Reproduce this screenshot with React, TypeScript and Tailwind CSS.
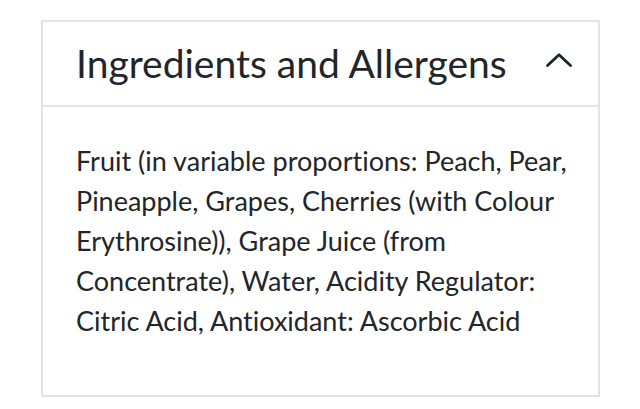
import React from 'react';

const INGREDIENTS = [
  'Fruit (in variable proportions: Peach, Pear,',
  'Pineapple, Grapes, Cherries (with Colour',
  'Erythrosine)), Grape Juice (from',
  'Concentrate), Water, Acidity Regulator:',
  'Citric Acid, Antioxidant: Ascorbic Acid',
];

const ChevronUp = () => (
  <svg width="26" height="14" viewBox="0 0 26 14" fill="none" className="mb-2">
    <polyline points="1.5,12.5 13,1.8 24.5,12.5" stroke="#1f2328" strokeWidth="2.8" strokeLinecap="round" strokeLinejoin="round" />
  </svg>
);

export default function App() {
  return (
    <div className="min-h-screen bg-white pt-[20px] pl-[41px] font-['Lato','Liberation_Sans',sans-serif] text-[#222529] [font-variant-ligatures:none]">
      <div className="w-[559px] border-2 border-[#e4e4e4]">
        {/* Header */}
        <div className="flex h-[85px] items-center justify-between border-b-2 border-[#e4e4e4] pl-[33px] pr-[26px]">
          <h2 className="text-[39px] leading-none">Ingredients and Allergens</h2>
          <ChevronUp />
        </div>

        {/* Body */}
        <div className="pl-[33px] pt-[34px] pb-[54px] text-[27px] leading-[40px]">
          {INGREDIENTS.map((line) => (
            <div key={line}>{line}</div>
          ))}
        </div>
      </div>
    </div>
  );
}
